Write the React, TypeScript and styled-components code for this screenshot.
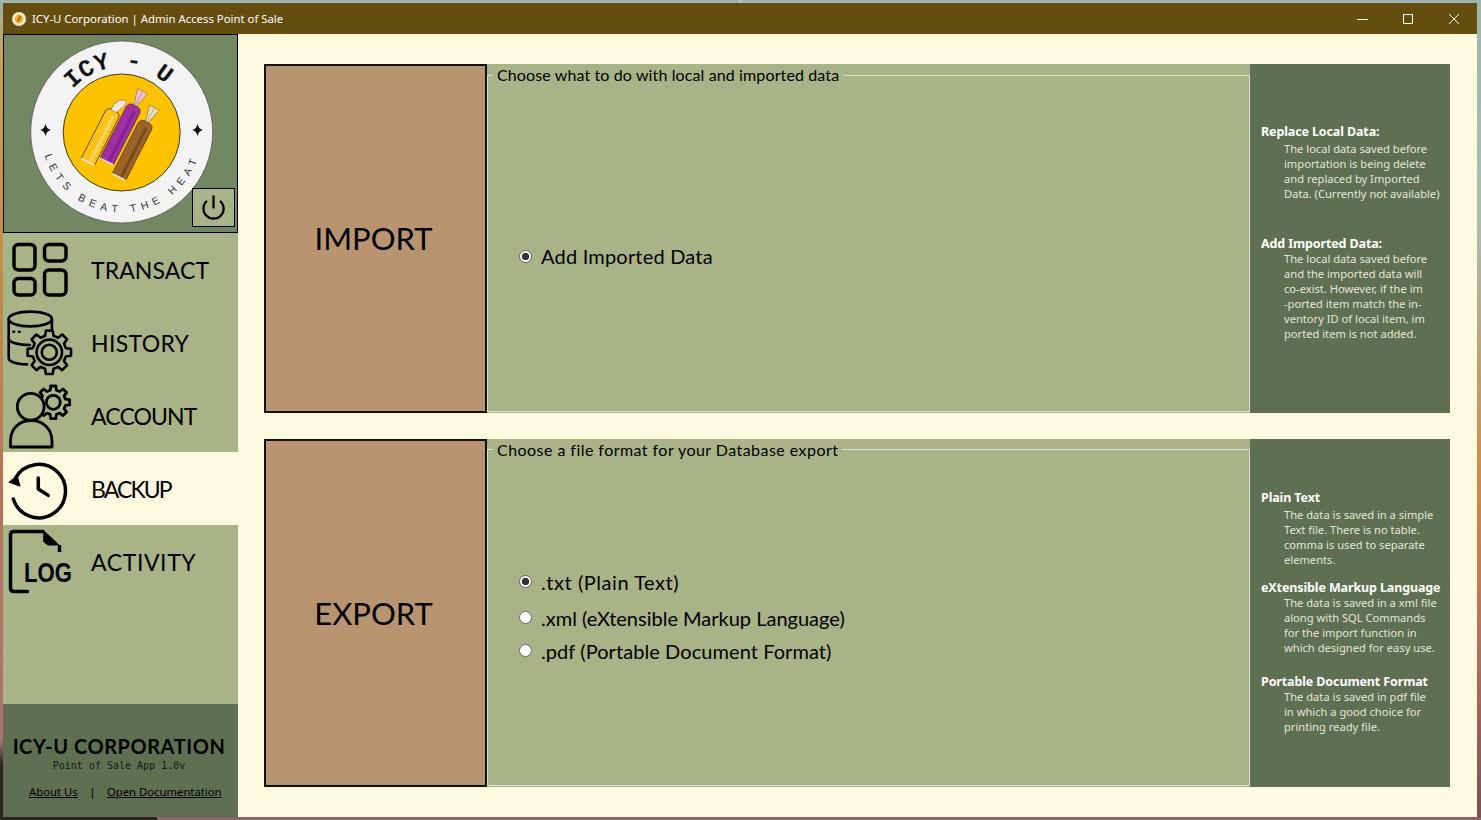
import styled, { createGlobalStyle } from 'styled-components';
import { Power } from 'lucide-react';

const GlobalStyle = createGlobalStyle`
  html, body {
    margin: 0;
    height: 100%;
    overflow: hidden;
  }
  body {
    background:
      linear-gradient(to right, #2b2522 0, #2b2522 157px, #8a6468 157px, #8a6468 100%) bottom / 100% 3px no-repeat,
      linear-gradient(to bottom, #9db4b0 0, #a9bcae 220px, #d08a45 480px, #b9705c 640px, #7d4d55 820px) right / 50% 100% no-repeat,
      linear-gradient(to bottom, #9db4b0 0, #c9a04c 60px, #c08a48 300px, #b5745a 500px, #a5756c 740px, #2b2522 765px, #2b2522 820px) left / 50% 100% no-repeat;
  }
`;

const comic = `"Comic Sans MS", "Lato", sans-serif`;
const segoe = `"Segoe UI", "Noto Sans", sans-serif`;

const Page = styled.div`
  height: 820px;
  box-sizing: border-box;
  padding: 3px 4px 3px 3px;
`;

const Window = styled.div`
  height: 100%;
  display: flex;
  flex-direction: column;
  background-color: #fefae0;
`;

const TitleBar = styled.div`
  height: 31px;
  flex: none;
  display: flex;
  align-items: center;
  background-color: #634e0f;
  color: #fff;
  font: 11.35px ${segoe};
  padding-left: 9px;
`;

const TitleText = styled.span`
  margin-left: 6px;
  flex: 1;
`;

const WinButton = styled.button`
  width: 46px;
  height: 31px;
  padding: 0;
  border: 0;
  background: none;
  display: flex;
  align-items: center;
  justify-content: center;
  color: #fff;
`;

const Body = styled.div`
  flex: 1;
  display: flex;
  min-height: 0;
`;

const Sidebar = styled.aside`
  width: 235px;
  flex: none;
  display: flex;
  flex-direction: column;
  background-color: #a9b388;
`;

const LogoPanel = styled.div`
  position: relative;
  height: 199px;
  box-sizing: border-box;
  border: 1px solid #000;
  background-color: #738763;
`;

const LogoSvg = styled.svg`
  display: block;
`;

const PowerButton = styled.button`
  position: absolute;
  right: 2px;
  bottom: 5px;
  width: 43px;
  height: 39px;
  box-sizing: border-box;
  padding: 0;
  border: 1px solid #000;
  background-color: #a9b388;
  display: flex;
  align-items: center;
  justify-content: center;
  color: #000;
`;

const NavItem = styled.div<{ $active?: boolean }>`
  height: 73px;
  flex: none;
  display: flex;
  align-items: center;
  background-color: ${(p) => (p.$active ? '#fefae0' : 'transparent')};
`;

const NavIcon = styled.svg`
  width: 80px;
  height: 73px;
  flex: none;
  fill: none;
  stroke: #000;
  stroke-linejoin: round;
  stroke-linecap: round;
`;

const NavLabel = styled.span<{ $spacing: number }>`
  margin-left: 8px;
  font: 23px ${comic};
  color: #000;
  letter-spacing: ${(p) => p.$spacing}px;
`;

const SideFill = styled.div`
  flex: 1;
`;

const Footer = styled.footer`
  height: 113px;
  flex: none;
  box-sizing: border-box;
  padding-top: 30px;
  display: flex;
  flex-direction: column;
  background-color: #5f6f52;
  color: #000;
`;

const Brand = styled.div`
  height: 24px;
  text-align: center;
  font: bold 20px/24px ${comic};
  letter-spacing: 0.55px;
  padding-right: 3px;
`;

const Version = styled.div`
  height: 12px;
  margin-top: 2px;
  padding-right: 3px;
  text-align: center;
  font: 10px/12px "DejaVu Sans Mono", monospace;
  color: #161a13;
`;

const FooterLinks = styled.div`
  margin-top: 13px;
  padding-left: 26px;
  display: flex;
  font: 11.3px/14px ${segoe};
`;

const FooterLink = styled.a`
  color: #000;
  text-decoration: underline;
`;

const Separator = styled.span`
  margin: 0 11.5px;
`;

const Main = styled.main`
  flex: 1;
  box-sizing: border-box;
  padding: 30px 27px 30px 26px;
  display: grid;
  grid-template-rows: 1fr 1fr;
  row-gap: 26px;
  min-width: 0;
`;

const Card = styled.section`
  display: flex;
  min-height: 0;
`;

const ActionPanel = styled.div`
  width: 223px;
  flex: none;
  box-sizing: border-box;
  border: 2px solid #111;
  padding-right: 4px;
  background-color: #b99470;
  display: flex;
  align-items: center;
  justify-content: center;
  font: 31px ${comic};
  color: #000;
`;

const OptionsWrap = styled.div`
  flex: 1;
  display: flex;
  min-width: 0;
  background-color: #a9b388;
`;

const Options = styled.fieldset`
  flex: 1;
  margin: 1px 0;
  padding: 0;
  min-width: 0;
  border: 1px solid #dde1cb;
`;

const Legend = styled.legend<{ $spacing: number }>`
  margin-left: 5px;
  padding: 0 4px;
  height: 20px;
  font: 16px/20px ${comic};
  color: #000;
  letter-spacing: ${(p) => p.$spacing}px;
`;

const OptionList = styled.div<{ $top: number }>`
  padding: ${(p) => p.$top}px 0 0 30px;
`;

const OptionRow = styled.label<{ $gap?: number; $spacing: number }>`
  height: 30px;
  margin-top: ${(p) => p.$gap ?? 0}px;
  display: flex;
  align-items: center;
  column-gap: 9px;
  font: 20px/30px ${comic};
  color: #000;
  letter-spacing: ${(p) => p.$spacing}px;
`;

const Radio = styled.input`
  appearance: none;
  width: 13px;
  height: 13px;
  margin: 0 0 0 1px;
  flex: none;
  box-sizing: border-box;
  border: 1px solid #666;
  border-radius: 50%;
  background-color: #fff;

  &:checked {
    background: radial-gradient(circle, #333 0, #333 3.4px, #fff 4px);
  }
`;

const Notes = styled.aside<{ $top: number }>`
  width: 200px;
  flex: none;
  box-sizing: border-box;
  padding: ${(p) => p.$top}px 8px 0 11px;
  background-color: #5f6f52;
`;

const NoteTitle = styled.div<{ $top?: number }>`
  height: 18px;
  margin-top: ${(p) => p.$top ?? 0}px;
  font: 700 12.5px/18px ${segoe};
  letter-spacing: -0.12px;
  color: #fff;
  white-space: nowrap;
`;

const NoteLines = styled.div<{ $top: number }>`
  margin-top: ${(p) => p.$top}px;
  padding-left: 23px;
  font: 11.15px/15px ${segoe};
  color: #e3e7d6;
  white-space: nowrap;
`;

const StarPath = ({ cx, cy }: { cx: number; cy: number }) => (
  <path
    fill="#111"
    d={`M${cx} ${cy - 6.5} Q${cx + 0.8} ${cy - 0.8} ${cx + 5.5} ${cy} Q${cx + 0.8} ${cy + 0.8} ${cx} ${cy + 6.5} Q${cx - 0.8} ${cy + 0.8} ${cx - 5.5} ${cy} Q${cx - 0.8} ${cy - 0.8} ${cx} ${cy - 6.5}Z`}
  />
);

// Rotated treat drawn upright around its own centre
const Candy = ({
  x,
  y,
  fill,
  shade,
  len,
  wrap,
  curl,
}: {
  x: number;
  y: number;
  fill: string;
  shade: string;
  len: number;
  wrap: string;
  curl?: boolean;
}) => {
  const t = -len / 2;
  return (
    <g transform={`translate(${x} ${y}) rotate(27)`}>
      <path
        d={`M-7.5 ${len / 2} V${t + 5} Q-7.5 ${t} 0 ${t} Q7.5 ${t} 7.5 ${t + 5} V${len / 2} Z`}
        fill={fill}
        stroke="#5a3d1a"
        strokeWidth="0.8"
      />
      <path d={`M2 ${len / 2 - 2} V${t + 6}`} stroke={shade} strokeWidth="3" />
      <path d={`M-7.5 ${len / 2} H7.5`} stroke="#f4e8dc" strokeWidth="1.6" />
      {curl ? (
        <path
          d={`M-3 ${t + 1} C-4 ${t - 7} 0 ${t - 13} 6 ${t - 14} C9 ${t - 12} 7 ${t - 7} 3 ${t + 1} Z`}
          fill={wrap}
          stroke="#8a6a5a"
          strokeWidth="0.6"
        />
      ) : (
        <>
          <path d={`M-1.5 ${t} L-5.5 ${t - 16} L5.5 ${t - 16} L1.5 ${t} Z`} fill={wrap} stroke="#8a6a5a" strokeWidth="0.6" />
          <path d={`M0 ${t} L0 ${t - 15}`} stroke="#8a6a5a" strokeWidth="0.5" />
        </>
      )}
    </g>
  );
};

const Logo = () => (
  <LogoSvg width="233" height="197" viewBox="4 35 233 197">
    <defs>
      <path id="arcTop" d="M56.7 132 A65 65 0 0 1 186.7 132" />
      <path id="arcBottom" d="M41.2 132 A80.5 80.5 0 0 0 202.2 132" />
    </defs>
    <circle cx="121.7" cy="132" r="91" fill="#f3f3f3" stroke="#555" strokeWidth="0.8" />
    <circle cx="121.7" cy="132.5" r="58.5" fill="#fec200" stroke="#3d3a20" strokeWidth="1" />
    <text
      fontFamily='"Liberation Mono", monospace'
      fontWeight="bold"
      fontSize="24"
      fill="#111"
      textAnchor="middle"
      letterSpacing="0.4"
      transform="rotate(-3 121.7 132)"
    >
      <textPath href="#arcTop" startOffset="50%" xmlSpace="preserve">
        ICY - U
      </textPath>
    </text>
    <text fontFamily='"Liberation Sans", sans-serif' fontSize="10.5" fill="#333" textAnchor="middle" letterSpacing="5.3">
      <textPath href="#arcBottom" startOffset="50%">
        LETS BEAT THE HEAT
      </textPath>
    </text>
    <StarPath cx={45.5} cy={130} />
    <StarPath cx={197.5} cy={130} />
    <Candy x={101} y={136} fill="#fdc31a" shade="#f2d76a" len={58} wrap="#f4e6d0" curl />
    <Candy x={121} y={133.5} fill="#a02fa6" shade="#7f2490" len={63} wrap="#f0c6cc" />
    <Candy x={133} y={149.5} fill="#9c6428" shade="#7b4a1c" len={62} wrap="#eadfc0" />
  </LogoSvg>
);

// Closed outline of a toothed wheel
const gearPath = (cx: number, cy: number, outer: number, inner: number, teeth: number) => {
  const step = (Math.PI * 2) / teeth;
  const pts: string[] = [];
  for (let i = 0; i < teeth; i++) {
    const a = i * step;
    const at = (r: number, t: number) =>
      `${(cx + r * Math.cos(a + t * step)).toFixed(1)} ${(cy + r * Math.sin(a + t * step)).toFixed(1)}`;
    pts.push(`${i ? 'L' : 'M'}${at(inner, -0.32)}`, `L${at(outer, -0.2)}`, `L${at(outer, 0.2)}`, `L${at(inner, 0.32)}`);
  }
  return pts.join(' ') + ' Z';
};

const TransactIcon = () => (
  <NavIcon viewBox="0 0 80 73" strokeWidth="3.5">
    <rect x="11" y="11.5" width="21" height="25.5" rx="4.5" />
    <rect x="41.5" y="11.5" width="21.5" height="16.5" rx="4.5" />
    <rect x="11" y="45.5" width="21" height="16.5" rx="4.5" />
    <rect x="41.5" y="37" width="21.5" height="25" rx="4.5" />
  </NavIcon>
);

const HistoryIcon = () => (
  <NavIcon viewBox="0 0 80 73" strokeWidth="2.6">
    <ellipse cx="27.3" cy="13" rx="21.6" ry="7.4" />
    <path d="M5.7 13 V52 C5.7 55.5 13 58 24 58.4" />
    <path d="M5.7 32.5 C5.7 36 14 39 27 39" />
    <path d="M48.9 13 V25" />
    <path d="M10.5 25.7 h0.6 M16 25.7 h0.6" />
    <path d={gearPath(46.3, 46.3, 22, 17, 8)} fill="#a9b388" />
    <circle cx="46.3" cy="46.3" r="12.7" />
    <circle cx="46.3" cy="46.3" r="7.5" />
  </NavIcon>
);

const AccountIcon = () => (
  <NavIcon viewBox="0 0 80 73" strokeWidth="2.8">
    <path d={gearPath(50.3, 23.3, 16.5, 12.5, 8)} />
    <circle cx="50.3" cy="23.3" r="7" />
    <circle cx="27.7" cy="27.7" r="13.4" fill="#a9b388" />
    <path d="M7.5 68 V62 C7.5 50 16 41.5 28 41.5 C40 41.5 49 50 49 62 V68 Z" fill="#a9b388" />
  </NavIcon>
);

const BackupIcon = () => (
  <NavIcon viewBox="0 0 80 73" strokeWidth="3.5">
    <path d="M10.3 47 A26.7 26.7 0 1 0 12.5 26" />
    <path d="M35.3 26 V37 L45.3 43.4" />
    <path d="M6.3 30.2 L17 34.2 L14.3 24.2 Z" fill="#000" strokeWidth="1" />
  </NavIcon>
);

const LogText = styled.text`
  font: bold 27px "Liberation Sans", sans-serif;
  fill: #000;
  stroke: none;
`;

const ActivityIcon = () => (
  <NavIcon viewBox="0 0 80 73" strokeWidth="3.5">
    <path d="M24.5 66.5 H11 Q7.5 66.5 7.5 63 V10 Q7.5 6.5 11 6.5 H40" />
    <path d="M41 6 L56 20 H45 L41 17 Z" fill="#000" strokeWidth="1" />
    <path d="M56.5 20 V27" strokeLinecap="butt" />
    <LogText x="21" y="57" textLength="48" lengthAdjust="spacingAndGlyphs">
      LOG
    </LogText>
  </NavIcon>
);

const AppIcon = () => (
  <svg width="14" height="14" viewBox="0 0 14 14">
    <circle cx="7" cy="7" r="7" fill="#f1ece0" />
    <circle cx="7" cy="7" r="4.4" fill="#f0b416" />
    <path d="M5.5 9.5 L8.5 4.5" stroke="#a0562a" strokeWidth="1.6" />
  </svg>
);

const NAV = [
  { label: 'TRANSACT', icon: <TransactIcon />, spacing: 0.1 },
  { label: 'HISTORY', icon: <HistoryIcon />, spacing: 0.35 },
  { label: 'ACCOUNT', icon: <AccountIcon />, spacing: -0.9 },
  { label: 'BACKUP', icon: <BackupIcon />, spacing: -1.9, active: true },
  { label: 'ACTIVITY', icon: <ActivityIcon />, spacing: 0.6 },
];

const App = () => {
  return (
    <Page>
      <GlobalStyle />
      <Window>
        <TitleBar>
          <AppIcon />
          <TitleText>ICY-U Corporation | Admin Access Point of Sale</TitleText>
          <WinButton>
            <svg width="12" height="12" viewBox="0 0 12 12">
              <path d="M1 6.5 H12" stroke="currentColor" />
            </svg>
          </WinButton>
          <WinButton>
            <svg width="12" height="12" viewBox="0 0 12 12">
              <rect x="1.5" y="1.5" width="9" height="9" fill="none" stroke="currentColor" />
            </svg>
          </WinButton>
          <WinButton>
            <svg width="12" height="12" viewBox="0 0 12 12">
              <path d="M1 1 L11 11 M11 1 L1 11" stroke="currentColor" />
            </svg>
          </WinButton>
        </TitleBar>
        <Body>
          <Sidebar>
            <LogoPanel>
              <Logo />
              <PowerButton>
                <Power size={27} strokeWidth={2} />
              </PowerButton>
            </LogoPanel>
            {NAV.map((item) => (
              <NavItem key={item.label} $active={item.active}>
                {item.icon}
                <NavLabel $spacing={item.spacing}>{item.label}</NavLabel>
              </NavItem>
            ))}
            <SideFill />
            <Footer>
              <Brand>ICY-U CORPORATION</Brand>
              <Version>Point of Sale App 1.0v</Version>
              <FooterLinks>
                <FooterLink>About Us</FooterLink>
                <Separator>|</Separator>
                <FooterLink>Open Documentation</FooterLink>
              </FooterLinks>
            </Footer>
          </Sidebar>
          <Main>
            <Card>
              <ActionPanel>IMPORT</ActionPanel>
              <OptionsWrap>
                <Options>
                  <Legend $spacing={0.12}>Choose what to do with local and imported data</Legend>
                  <OptionList $top={156}>
                    <OptionRow $spacing={0.2}>
                      <Radio type="radio" name="import" defaultChecked />
                      Add Imported Data
                    </OptionRow>
                  </OptionList>
                </Options>
              </OptionsWrap>
              <Notes $top={59}>
                <NoteTitle>Replace Local Data:</NoteTitle>
                <NoteLines $top={-0.5}>
                  The local data saved before
                  <br />
                  importation is being delete
                  <br />
                  and replaced by Imported
                  <br />
                  Data. (Currently not available)
                </NoteLines>
                <NoteTitle $top={34}>Add Imported Data:</NoteTitle>
                <NoteLines $top={-1.5}>
                  The local data saved before
                  <br />
                  and the imported data will
                  <br />
                  co-exist. However, if the im
                  <br />
                  -ported item match the in-
                  <br />
                  ventory ID of local item, im
                  <br />
                  ported item is not added.
                </NoteLines>
              </Notes>
            </Card>
            <Card>
              <ActionPanel>EXPORT</ActionPanel>
              <OptionsWrap>
                <Options>
                  <Legend $spacing={0.45}>Choose a file format for your Database export</Legend>
                  <OptionList $top={107}>
                    <OptionRow $spacing={0.55}>
                      <Radio type="radio" name="export" defaultChecked />
                      .txt (Plain Text)
                    </OptionRow>
                    <OptionRow $gap={6} $spacing={0}>
                      <Radio type="radio" name="export" />
                      .xml (eXtensible Markup Language)
                    </OptionRow>
                    <OptionRow $gap={3} $spacing={0.07}>
                      <Radio type="radio" name="export" />
                      .pdf (Portable Document Format)
                    </OptionRow>
                  </OptionList>
                </Options>
              </OptionsWrap>
              <Notes $top={50}>
                <NoteTitle>Plain Text</NoteTitle>
                <NoteLines $top={0.5}>
                  The data is saved in a simple
                  <br />
                  Text file. There is no table.
                  <br />
                  comma is used to separate
                  <br />
                  elements.
                </NoteLines>
                <NoteTitle $top={11.5}>eXtensible Markup Language</NoteTitle>
                <NoteLines $top={-1.5}>
                  The data is saved in a xml file
                  <br />
                  along with SQL Commands
                  <br />
                  for the import function in
                  <br />
                  which designed for easy use.
                </NoteLines>
                <NoteTitle $top={17.5}>Portable Document Format</NoteTitle>
                <NoteLines $top={-1.5}>
                  The data is saved in pdf file
                  <br />
                  in which a good choice for
                  <br />
                  printing ready file.
                </NoteLines>
              </Notes>
            </Card>
          </Main>
        </Body>
      </Window>
    </Page>
  );
};

export default App;
